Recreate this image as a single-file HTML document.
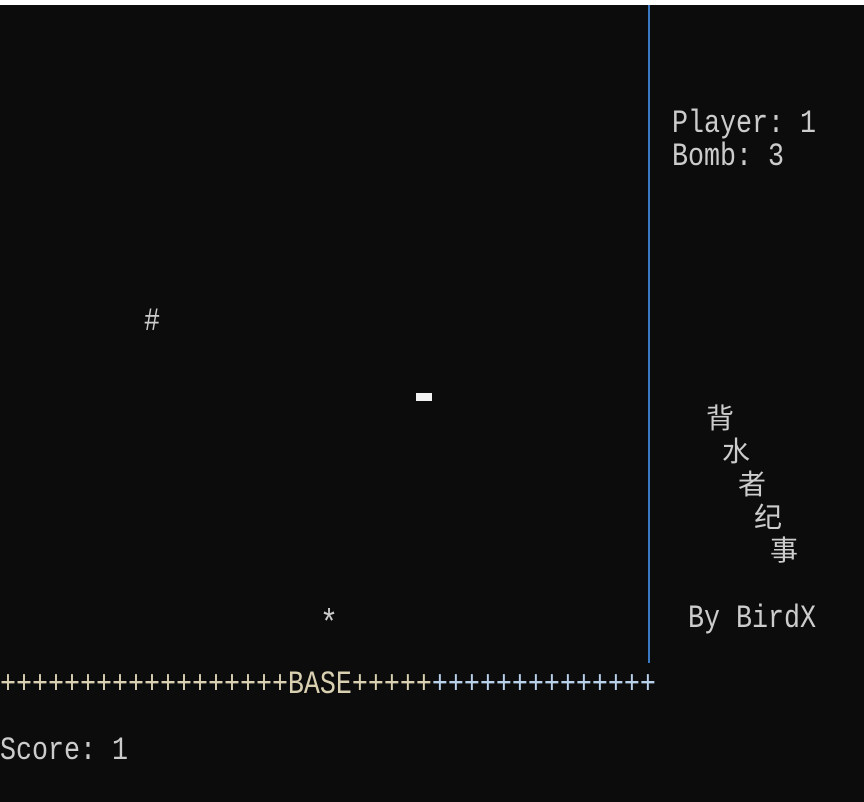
<!DOCTYPE html>
<html><head><meta charset="utf-8"><style>
html,body{margin:0;padding:0;background:#0c0c0c;width:864px;height:802px;overflow:hidden;position:relative}
.top{position:absolute;left:0;top:0;width:864px;height:5px;background:#fff}
.vl{position:absolute;left:648px;top:5px;width:2px;height:658px;background:#3a7ac4}
.t{position:absolute;height:33px;line-height:33px;font-family:"Liberation Mono","Noto Sans CJK SC",monospace;font-size:26.67px;color:#cccccc;white-space:pre;transform:scaleY(1.2);transform-origin:left center}
.c{position:absolute;font-family:"Liberation Sans","Noto Sans CJK SC",sans-serif;font-size:28px;line-height:33px;color:#cccccc}
.blk{position:absolute;left:416px;top:393px;width:16px;height:8px;background:#f2f2f2}
</style></head><body>
<div class="top"></div>
<div class="vl"></div>
<div class="t" style="left:672px;top:109px">Player: 1</div>
<div class="t" style="left:672px;top:142px">Bomb: 3</div>
<div class="t" style="left:144px;top:307px">#</div>
<div class="blk"></div>
<div class="c" style="left:706px;top:402px">背</div>
<div class="c" style="left:722px;top:435px">水</div>
<div class="c" style="left:738px;top:468px">者</div>
<div class="c" style="left:754px;top:501px">纪</div>
<div class="c" style="left:770px;top:534px">事</div>
<div class="t" style="left:320px;top:610px;font-size:30px">*</div>
<div class="t" style="left:688px;top:604px">By BirdX</div>
<div class="t" style="left:0;top:670px"><span style="color:#d8d0b0">++++++++++++++++++BASE+++++</span><span style="color:#b8d0ea">++++++++++++++</span></div>
<div class="t" style="left:0;top:736px">Score: 1</div>
</body></html>
